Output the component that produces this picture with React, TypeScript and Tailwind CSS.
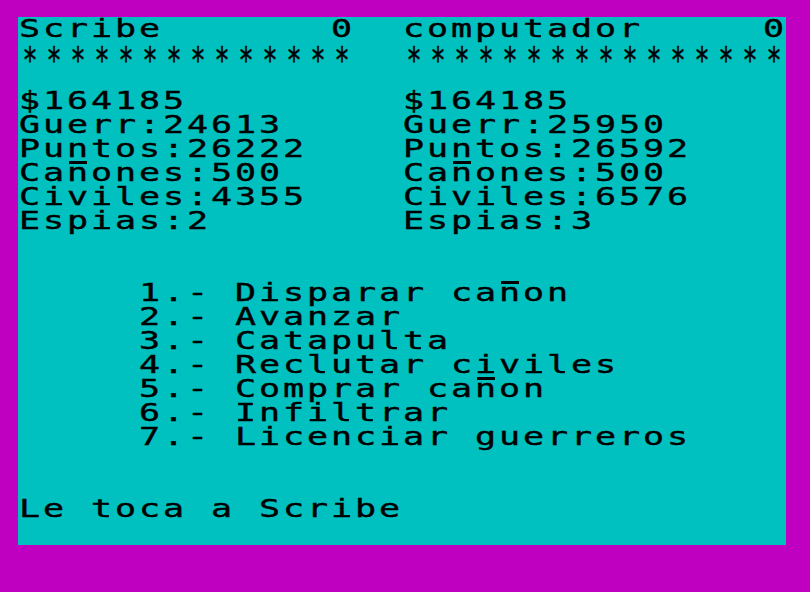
const pad = (s: string, n: number) => s + " ".repeat(Math.max(0, n - s.length));

const twoCols = (a: string, b: string) => pad(a, 16) + b;

const SCREEN: string[] = [
  pad("Scribe", 13) + "0" + "  " + pad("computador", 15) + "0",
  "*".repeat(14) + "  " + "*".repeat(16),
  "",
  twoCols("$164185", "$164185"),
  twoCols("Guerr:24613", "Guerr:25950"),
  twoCols("Puntos:26222", "Puntos:26592"),
  twoCols("Cañones:500", "Cañones:500"),
  twoCols("Civiles:4355", "Civiles:6576"),
  twoCols("Espias:2", "Espias:3"),
  "",
  "",
  "     1.- Disparar cañon",
  "     2.- Avanzar",
  "     3.- Catapulta",
  "     4.- Reclutar civiles",
  "     5.- Comprar cañon",
  "     6.- Infiltrar",
  "     7.- Licenciar guerreros",
  "",
  "",
  "Le toca a Scribe",
  "",
];

function Cell({ ch }: { ch: string }) {
  if (ch === "ñ") {
    // the game's ñ: plain n with a bar on the top pixel row of the cell
    return (
      <span className="relative flex w-[24px] justify-center">
        <span className="absolute left-[3px] top-0 h-[3px] w-[18px] bg-black" />
        <span className="inline-block scale-x-140">n</span>
      </span>
    );
  }
  if (ch === "*") {
    return (
      <span className="flex w-[24px] justify-center">
        <span className="inline-block translate-y-[8px] scale-x-100 scale-y-140">*</span>
      </span>
    );
  }
  return (
    <span className="flex w-[24px] justify-center">
      <span className="inline-block scale-x-140 whitespace-pre">{ch}</span>
    </span>
  );
}

function Row({ text }: { text: string }) {
  const chars = Array.from(pad(text, 32));
  return (
    <div className="flex h-[24px]">
      {chars.map((ch, i) => (
        <Cell key={i} ch={ch} />
      ))}
    </div>
  );
}

export default function App() {
  return (
    <div className="h-[592px] w-[810px] bg-[#c000c0] pl-[18px] pt-[17px]">
      <div className="h-[528px] w-[768px] bg-[#00c0c0] font-['DejaVu_Sans_Mono',monospace] text-[25px] leading-[24px] text-black [-webkit-text-stroke:0.4px_black]">
        {SCREEN.map((line, i) => (
          <Row key={i} text={line} />
        ))}
      </div>
    </div>
  );
}
